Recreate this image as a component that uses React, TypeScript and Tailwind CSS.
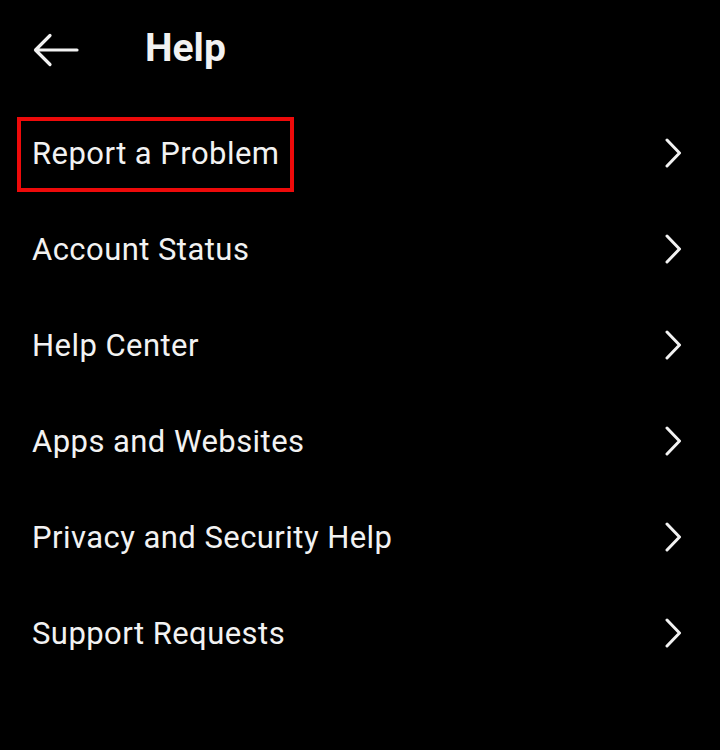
import React from 'react';

const items = [
  'Report a Problem',
  'Account Status',
  'Help Center',
  'Apps and Websites',
  'Privacy and Security Help',
  'Support Requests',
];

const Chevron = () => (
  <svg width="18" height="30" viewBox="0 0 18 30" fill="none" className="shrink-0">
    <path d="M3 2 L15.5 15 L3 28" stroke="#f2f2f2" strokeWidth="3" strokeLinecap="round" strokeLinejoin="round" />
  </svg>
);

const Help = () => {
  return (
    <div className="min-h-screen w-[720px] h-[750px] bg-black text-[#f2f2f2]" style={{ fontFamily: 'Roboto, "Noto Sans", sans-serif' }}>
      {/* Header */}
      <header className="flex items-center h-[100px] pl-[33px]">
        <svg width="46" height="34" viewBox="0 0 46 34" fill="none" className="shrink-0">
          <path d="M3 17 H44 M17 2.5 L2.5 17 L17 31.5" stroke="#f2f2f2" strokeWidth="3.2" strokeLinecap="round" strokeLinejoin="round" />
        </svg>
        <h1 className="ml-[66px] text-[39px] font-bold leading-none -mt-[4px]">Help</h1>
      </header>

      {/* Rows */}
      <ul className="pt-[5px]">
        {items.map((item, i) => (
          <li key={item} className="flex items-center justify-between h-[96px] pl-[32px] pr-[38px]">
            {i === 0 ? (
              <span className="relative text-[31px] leading-none tracking-[0.45px]">
                {item}
                <span className="absolute -left-[15px] -right-[15px] -top-[21px] -bottom-[23px] border-4 border-[#ee0a0a]" />
              </span>
            ) : (
              <span className="text-[31px] leading-none tracking-[0.45px]">{item}</span>
            )}
            <Chevron />
          </li>
        ))}
      </ul>
    </div>
  );
};

export default Help;
